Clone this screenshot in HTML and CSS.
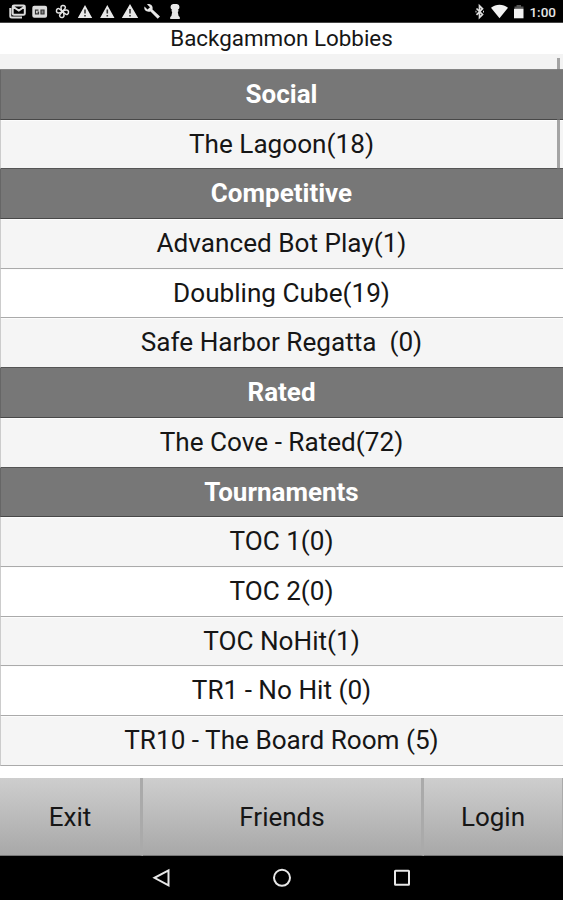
FILE: index.html
```html
<!DOCTYPE html>
<html lang="en">
<head>
<meta charset="utf-8">
<title>Backgammon Lobbies</title>
<link rel="stylesheet" href="styles.css">
</head>
<body>
<div class="screen">
  <header class="status">
    <svg class="notices" viewBox="0 0 190 22" width="190" height="22" aria-hidden="true">
      <g fill="none" stroke="#dcdcdc" stroke-width="2">
        <path d="M14 5.500h9.500q1.300 0 1.300 1.300v6.700q0 1.300-1.300 1.300H14q-1.300 0-1.300-1.300V6.800q0-1.300 1.300-1.300zM10.300 8v8q0 1.500 1.500 1.500H22M13.500 7l5.300 3.500L24 7"/>
        <rect x="33.300" y="6.800" width="12.800" height="10" rx="1" fill="#dcdcdc"/>
      </g>
      <g fill="none" stroke="#333" stroke-width="1.200">
        <path d="M38.500 10.200h-3v3.600h3v-1.600h-1M41 10.200h3v3.600h-3zM41 12h3"/>
      </g>
      <g fill="none" stroke="#e4e4e4" stroke-width="1.500">
        <path id="blade" d="M62.500 11.500c-1.500-1.500-2.500-5.500 0-6 2.500-.3 3.500 1.500 2.500 3-.5 1-1.500 1.500-2.500 3z"/>
        <use href="#blade" transform="rotate(90 62.500 11.500)"/>
        <use href="#blade" transform="rotate(180 62.500 11.500)"/>
        <use href="#blade" transform="rotate(270 62.500 11.500)"/>
      </g>
      <g fill="#e8e8e8">
        <path d="M85 5l7.200 13H77.800zM107.300 5l7.200 13h-14.400zM130 4l8.200 14h-16.400z"/>
        <path d="M144.500 6.500l3 3 2.500-2.300-3-3c3-1 6.500 1.300 5.500 5.300l7.500 7-2.300 2.300-7.200-7.300c-4 1-7-1.500-6-5z"/>
        <path d="M173 4h4q2.500.7 2.500 3 0 2-1.700 3l1 .7-1 1.300.8 4 1.200 1v2h-9.600v-2l1.200-1 .8-4-1-1.300 1-.7q-1.700-1-1.700-3 0-2.300 2.500-3z"/>
      </g>
      <path d="M85 9.500v4M85 15v1.500M107.300 9.500v4M107.300 15v1.500M130 9v4.500M130 15v1.500" stroke="#333" stroke-width="1.600"/>
    </svg>
    <div class="system">
      <svg viewBox="0 0 54 22" width="54" height="22" aria-hidden="true">
        <path d="M2.500 8.500l6 6-3 3V5.800l3 3-6 6M1.500 11.700h1M9 11.700h1" fill="none" stroke="#dedede" stroke-width="1.700"/>
        <path d="M17 7.800c5-4 12-4 17 0L25.500 18.200z" fill="#f2f2f2"/>
        <path d="M40.500 6.500h2V5h4.500v1.500h2.500V9h-9z" fill="#555"/>
        <path d="M40 8.800h9.500v9.500H40z" fill="#f2f2f2"/>
      </svg>
      <span class="clock">1:00</span>
    </div>
  </header>
  <h1 class="title">Backgammon Lobbies</h1>
  <main class="lobbies">
    <ul class="list">
      <li class="row group">Social</li>
      <li class="row">The Lagoon(18)</li>
      <li class="row group">Competitive</li>
      <li class="row">Advanced Bot Play(1)</li>
      <li class="row plain">Doubling Cube(19)</li>
      <li class="row">Safe Harbor Regatta&nbsp; (0)</li>
      <li class="row group">Rated</li>
      <li class="row">The Cove - Rated(72)</li>
      <li class="row group">Tournaments</li>
      <li class="row">TOC 1(0)</li>
      <li class="row plain">TOC 2(0)</li>
      <li class="row">TOC NoHit(1)</li>
      <li class="row plain">TR1 - No Hit (0)</li>
      <li class="row">TR10 - The Board Room (5)</li>
    </ul>
    <div class="scrollbar"></div>
  </main>
  <div class="actions">
    <button class="action">Exit</button>
    <button class="action">Friends</button>
    <button class="action">Login</button>
  </div>
  <nav class="navbar">
    <svg viewBox="0 0 20 20" width="20" height="20" aria-hidden="true"><path d="M16.500 2.300v15L2.500 9.800z"/></svg>
    <svg viewBox="0 0 20 20" width="20" height="20" aria-hidden="true"><circle cx="10" cy="9.800" r="8"/></svg>
    <svg viewBox="0 0 20 20" width="20" height="20" aria-hidden="true"><rect x="3" y="2.800" width="14" height="14" rx=".5"/></svg>
  </nav>
</div>
</body>
</html>
```
FILE: styles.css
```css
* { box-sizing: border-box; }

body {
  margin: 0;
  font-family: Roboto, sans-serif;
  color: #161616;
  background: #fff;
}

.screen {
  display: flex;
  flex-direction: column;
  width: 563px;
  height: 900px;
  overflow: hidden;
}

.status {
  display: flex;
  justify-content: space-between;
  height: 23px;
  flex: none;
  background: #000;
  border-bottom: 1px solid #444;
}

.system { display: flex; padding-right: 7px; }

.clock {
  width: 28px;
  font-size: 13.5px;
  font-weight: 500;
  line-height: 24px;
  text-align: right;
  color: #e4e4e4;
}

.title {
  flex: none;
  height: 31px;
  margin: 0;
  font-size: 22.4px;
  font-weight: 400;
  line-height: 30px;
  text-align: center;
}

.lobbies {
  position: relative;
  flex: none;
  height: 724px;
  padding-top: 15px;
  overflow: hidden;
  background: linear-gradient(#f3f3f3 15px, #fff 15px);
}

.list {
  margin: 0;
  padding: 0;
  list-style: none;
  border-top: 1px solid #858585;
}

.row {
  height: 49.7px;
  border-bottom: 1px solid #aaa;
  border-left: 1px solid #ccc;
  background: #f5f5f5;
  box-shadow: inset 0 1px #fcfcfc;
  padding-right: 1px;
  font-size: 26.15px;
  line-height: 49px;
  text-align: center;
  white-space: nowrap;
}

.plain { background: #fff; }

.group {
  background: #777;
  box-shadow: none;
  border-bottom-color: #484848;
  border-left-color: #666;
  color: #fff;
  font-weight: 700;
  font-size: 26px;
  line-height: 49.5px;
}

.row:has(+ .group) { border-bottom-color: #555; }

.scrollbar {
  position: absolute;
  top: 4px;
  right: 3px;
  width: 3px;
  height: 111px;
  background: rgba(120, 120, 120, .65);
}

.actions {
  display: grid;
  grid-template-columns: 143px 281px 1fr;
  flex: none;
  height: 78px;
}

.action {
  padding: 0;
  border: 0;
  border-right: 3px solid #aaa;
  border-bottom: 1px solid #777;
  background: linear-gradient(#cecece, #a8a8a8);
  color: #161616;
  font-family: inherit;
  font-size: 26px;
}

.action:last-child { border-right-width: 1px; }

.navbar {
  display: flex;
  flex: 1;
  gap: 100px;
  align-items: center;
  justify-content: center;
  background: #000;
}

.navbar svg {
  fill: none;
  stroke: #e8e8e8;
  stroke-width: 2;
}
```
